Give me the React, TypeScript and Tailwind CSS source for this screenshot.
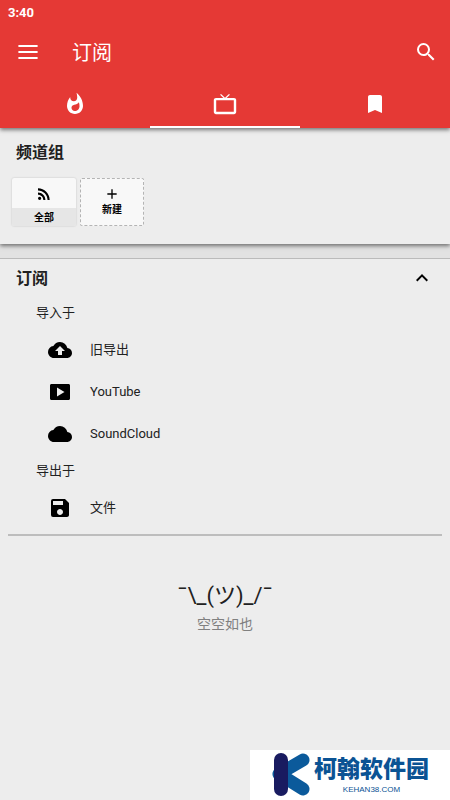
import { useState, type ReactNode } from "react";

type IconProps = { d: string; className?: string };

function Icon({ d, className = "size-6" }: IconProps) {
  return (
    <svg viewBox="0 0 24 24" fill="currentColor" aria-hidden="true" className={className}>
      <path d={d} />
    </svg>
  );
}

const icons = {
  menu: "M2.4 4.9h19.2v2.1h-19.2zM2.4 10.9h19.2v2.1h-19.2zM2.4 16.9h19.2v2.1h-19.2z",
  search:
    "M15.5 14h-.79l-.28-.27A6.471 6.471 0 0 0 16 9.5 6.5 6.5 0 1 0 9.5 16c1.61 0 3.09-.59 4.23-1.57l.27.28v.79l5 4.99L20.49 19l-4.99-5zm-6 0C7.01 14 5 11.99 5 9.5S7.01 5 9.5 5 14 7.01 14 9.5 11.99 14 9.5 14z",
  fire: "M13.5.67s.74 2.65.74 4.8c0 2.06-1.35 3.73-3.41 3.73-2.07 0-3.63-1.67-3.63-3.73l.03-.36C5.21 7.51 4 10.62 4 14c0 4.42 3.58 8 8 8s8-3.58 8-8C20 8.61 17.41 3.8 13.5.67zM11.71 19c-1.78 0-3.22-1.4-3.22-3.14 0-1.62 1.05-2.76 2.81-3.12 1.77-.36 3.6-1.21 4.62-2.58.39 1.29.59 2.65.59 4.04 0 2.65-2.15 4.8-4.8 4.8z",
  tv: "M21 6h-7.4l3.3-3.2-.9-.9-4 3.9-4-3.9-.9.9L10.4 6H3c-1.2 0-2.2.9-2.2 2v12c0 1.2 1 2.2 2.2 2.2h18c1.2 0 2.2-1 2.2-2.2V8c0-1.1-1-2-2.2-2zm-.2 13.8H3.2V8.2h17.6v11.6z",
  bookmark: "M17 3H7c-1.1 0-1.99.9-1.99 2L5 21l7-3 7 3V5c0-1.1-.9-2-2-2z",
  rss: "M6.18 15.64a2.18 2.18 0 1 0 0 4.36 2.18 2.18 0 0 0 0-4.36zM4 4.44v2.83c7.03 0 12.73 5.7 12.73 12.73h2.83c0-8.59-6.97-15.56-15.56-15.56zm0 5.66v2.83c3.9 0 7.07 3.17 7.07 7.07h2.83c0-5.47-4.43-9.9-9.9-9.9z",
  add: "M19 13h-6v6h-2v-6H5v-2h6V5h2v6h6v2z",
  less: "M12 8l-6 6 1.41 1.41L12 10.83l4.59 4.58L18 14z",
  backup:
    "M19.35 10.04A7.49 7.49 0 0 0 12 4C9.11 4 6.6 5.64 5.35 8.04A5.994 5.994 0 0 0 0 14c0 3.31 2.69 6 6 6h13c2.76 0 5-2.24 5-5 0-2.64-2.05-4.78-4.65-4.96zM14 13v4h-4v-4H7l5-5 5 5h-3z",
  youtube:
    "M20.5 4h-17C2.6 4 2 4.6 2 5.5v13c0 .9.6 1.5 1.5 1.5h17c.9 0 1.5-.6 1.5-1.5v-13c0-.9-.6-1.5-1.5-1.5zM9 16.5v-9l7.5 4.5z",
  cloud:
    "M19.35 10.04A7.49 7.49 0 0 0 12 4C9.11 4 6.6 5.64 5.35 8.04A5.994 5.994 0 0 0 0 14c0 3.31 2.69 6 6 6h13c2.76 0 5-2.24 5-5 0-2.64-2.05-4.78-4.65-4.96z",
  save: "M17 3H5a2 2 0 0 0-2 2v14a2 2 0 0 0 2 2h14c1.1 0 2-.9 2-2V7l-4-4zm-5 16c-1.66 0-3-1.34-3-3s1.34-3 3-3 3 1.34 3 3-1.34 3-3 3zm3-10H5V5h10v4z",
};

const tabs = [
  { id: "trending", label: "热门", icon: icons.fire },
  { id: "subscriptions", label: "订阅", icon: icons.tv },
  { id: "bookmarks", label: "收藏", icon: icons.bookmark },
];

const importSources = [
  { label: "旧导出", icon: icons.backup },
  { label: "YouTube", icon: icons.youtube },
  { label: "SoundCloud", icon: icons.cloud },
];

function Source({ label, icon }: { label: string; icon: string }) {
  return (
    <li>
      <button type="button" className="flex h-[42px] w-full items-center gap-[18px] pl-12 text-[13px]">
        <Icon d={icon} className="size-6 text-black" />
        {label}
      </button>
    </li>
  );
}

function SourceList({ title, children }: { title: string; children: ReactNode }) {
  return (
    <div>
      <h3 className="flex h-8 items-center pl-9 text-[13px]">{title}</h3>
      <ul>{children}</ul>
    </div>
  );
}

function SiteBadge() {
  return (
    <div className="fixed right-0 bottom-0 flex h-[50px] w-[200px] items-start bg-white pt-[3px] pl-[21px] text-[#0b5394]">
      <svg viewBox="0 0 40 44" aria-hidden="true" className="h-11 w-10 shrink-0">
        <path
          d="M8 21 32 7M8 21 32 36"
          stroke="#0b5a9b"
          strokeWidth="13"
          strokeLinecap="round"
        />
        <rect x="3" y="0" width="14" height="43" rx="7" fill="#191b60" />
      </svg>
      <div className="flex flex-col items-center pt-px pl-[3px]">
        <span className="text-[23px] leading-8 font-black">柯翰软件园</span>
        <span className="font-['Liberation_Sans',sans-serif] text-[8px] leading-[8px]">KEHAN38.COM</span>
      </div>
    </div>
  );
}

export default function App() {
  const [activeTab, setActiveTab] = useState("subscriptions");
  const [expanded, setExpanded] = useState(true);

  return (
    <div className="min-h-screen bg-[#ededed] font-[Roboto,'Noto_Sans_CJK_SC',sans-serif] text-[#212121]">
      <header className="relative z-10 bg-[#e53935] text-white shadow-[0_2px_4px_rgba(0,0,0,0.5)]">
        <div className="flex h-6 items-center px-2 pt-0.5 text-[13px] font-bold">3:40</div>
        <div className="flex h-14 items-center px-4">
          <button type="button" aria-label="菜单">
            <Icon d={icons.menu} />
          </button>
          <h1 className="flex-1 pt-0.5 pl-8 text-[20px]">订阅</h1>
          <button type="button" aria-label="搜索" className="-mr-1">
            <Icon d={icons.search} />
          </button>
        </div>
        <nav className="grid grid-cols-3">
          {tabs.map((tab) => (
            <button
              key={tab.id}
              type="button"
              aria-label={tab.label}
              aria-current={tab.id === activeTab ? "page" : undefined}
              onClick={() => setActiveTab(tab.id)}
              className={
                tab.id === activeTab
                  ? "flex h-12 items-center justify-center border-b-2 border-white pt-0.5"
                  : "flex h-12 items-center justify-center"
              }
            >
              <Icon d={tab.icon} />
            </button>
          ))}
        </nav>
      </header>

      <main>
        <section className="relative bg-[#ededed] pb-[18px] shadow-[0_2px_4px_rgba(0,0,0,0.5)]">
          <h2 className="flex h-[50px] items-center px-4 text-base font-bold">频道组</h2>
          <div className="flex gap-1 px-3 text-[10px] font-bold text-black">
            <button
              type="button"
              className="flex h-12 w-16 flex-col overflow-hidden rounded-xs bg-[#f8f8f8] shadow-[0_0_2px_rgba(0,0,0,0.2)]"
            >
              <span className="flex h-[30px] w-full items-center justify-center pt-0.5">
                <Icon d={icons.rss} className="size-[18px]" />
              </span>
              <span className="flex h-[18px] w-full items-center justify-center bg-[#e6e6e6]">全部</span>
            </button>
            <button
              type="button"
              className="flex h-12 w-16 flex-col items-center rounded-xs border border-dashed border-[#b4b4b4] bg-[#f8f8f8] pt-[7px]"
            >
              <Icon d={icons.add} className="size-4" />
              <span className="leading-4">新建</span>
            </button>
          </div>
        </section>

        <div className="h-[14px] bg-[#e2e2e2]" />

        <section className="border-t border-[#bbbbbb]">
          <h2>
            <button
              type="button"
              aria-expanded={expanded}
              onClick={() => setExpanded(!expanded)}
              className="flex h-[38px] w-full items-center justify-between px-4 text-base font-bold"
            >
              <span className="pt-0.5">订阅</span>
              <Icon d={icons.less} className={expanded ? "size-6 text-black" : "size-6 rotate-180 text-black"} />
            </button>
          </h2>
          {expanded && (
            <>
              <SourceList title="导入于">
                {importSources.map((source) => (
                  <Source key={source.label} {...source} />
                ))}
              </SourceList>
              <SourceList title="导出于">
                <Source label="文件" icon={icons.save} />
              </SourceList>
            </>
          )}
          <hr className="mx-2 mt-[5px] border-t-2 border-[#bdbdbd]" />
        </section>

        <div className="flex flex-col items-center pt-[42px]">
          <p className="text-[22px] leading-9">¯\_(ツ)_/¯</p>
          <p className="text-sm leading-5 text-[#808080]">空空如也</p>
        </div>
      </main>

      <SiteBadge />
    </div>
  );
}
